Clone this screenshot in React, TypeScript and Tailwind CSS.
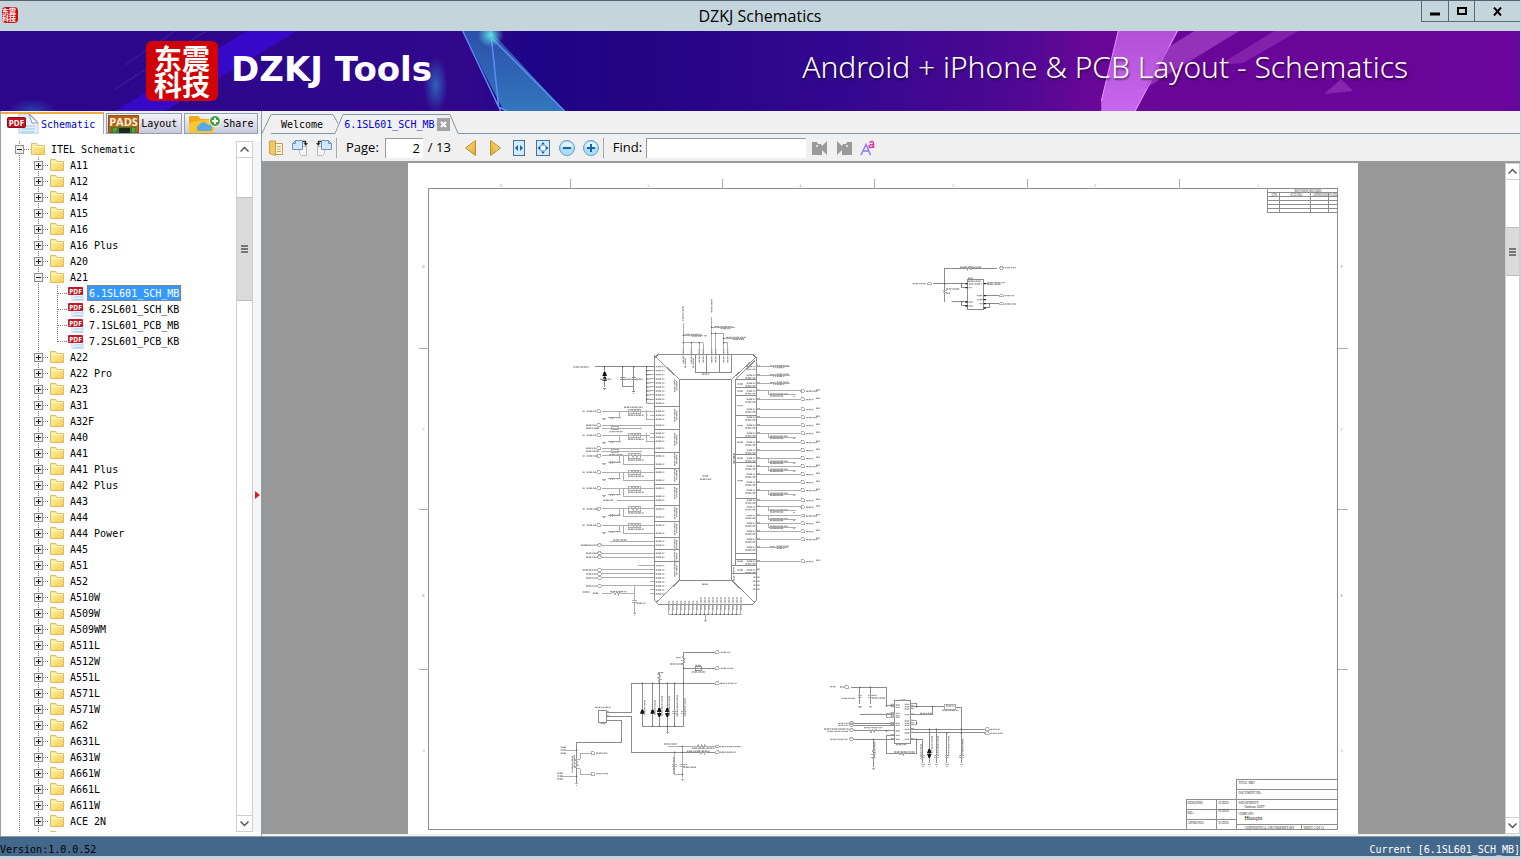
import { useState } from 'react'
import type { ReactNode } from 'react'

type TabId = 'schematic' | 'layout' | 'share'
type DocId = 'welcome' | 'sch'

const FILES = ['6.1SL601_SCH_MB', '6.2SL601_SCH_KB', '7.1SL601_PCB_MB', '7.2SL601_PCB_KB']

const MODELS = [
  'A11', 'A12', 'A14', 'A15', 'A16', 'A16 Plus', 'A20', 'A21', 'A22', 'A22 Pro', 'A23', 'A31', 'A32F',
  'A40', 'A41', 'A41 Plus', 'A42 Plus', 'A43', 'A44', 'A44 Power', 'A45', 'A51', 'A52', 'A510W', 'A509W',
  'A509WM', 'A511L', 'A512W', 'A551L', 'A571L', 'A571W', 'A62', 'A631L', 'A631W', 'A661W', 'A661L',
  'A611W', 'ACE 2N', '',
]

/* ---------- icons ---------- */

function FolderIcon() {
  return (
    <svg width="16" height="16" viewBox="0 0 16 16" className="block">
      <defs>
        <linearGradient id="folder" x1="0" y1="0" x2="1" y2="1">
          <stop offset="0" stopColor="#fff3b0" />
          <stop offset="1" stopColor="#f3cf52" />
        </linearGradient>
      </defs>
      <path d="M1.500 2.500h5l1.500 2h6.500v9h-13z" fill="url(#folder)" stroke="#e0bd5a" />
      <path d="M2 5.500h12" stroke="#fff8d0" />
    </svg>
  )
}

function PdfIcon() {
  return (
    <svg width="16" height="16" viewBox="0 0 16 16" className="block">
      <path d="M4 3h8l3 3v10H4z" fill="#eef6fd" stroke="#b9cfe4" />
      <path d="M6 12h8M6 14.500h8" stroke="#9fd0ee" />
      <rect x="0" y="2" width="15" height="8" rx="1" fill="#c01a28" />
      <text x="7.500" y="8.500" fontSize="6.500" fontWeight="bold" fill="#fff" textAnchor="middle" fontFamily="Open Sans">PDF</text>
    </svg>
  )
}

function PdfTabIcon() {
  return (
    <svg width="32" height="20" viewBox="0 0 32 20" className="block">
      <path d="M12 0h11l8 8v12H12z" fill="#e6f1fb" stroke="#b8cadb" />
      <path d="M22 0l9 9h-6z" fill="#fff" stroke="#8e9cab" />
      <path d="M14 12h14M14 15h14M14 18h14" stroke="#a9d3ef" strokeWidth="1.500" />
      <rect x="0.500" y="3.500" width="18" height="10" rx="1" fill="#c3131f" stroke="#8d0a14" />
      <text x="9.500" y="11.500" fontSize="8" fontWeight="bold" fill="#fff" textAnchor="middle" fontFamily="Open Sans">PDF</text>
    </svg>
  )
}

function PadsIcon() {
  return (
    <svg width="31" height="18" viewBox="0 0 31 18" className="block">
      <rect width="31" height="18" fill="#b5621c" />
      <rect x="0.500" y="0.500" width="30" height="17" fill="none" stroke="#9b4a10" />
      <text x="15.500" y="10.500" fontSize="11" fontWeight="bold" fill="#fff3d8" textAnchor="middle" fontFamily="Open Sans">PADS</text>
      <rect x="3" y="12" width="25" height="6" fill="#3f7d2c" />
      <rect x="11" y="13" width="11" height="5" fill="#1d2a1a" />
      <path d="M5 14h4M5 16h3M24 14h3M24 16h3" stroke="#7fbf4a" />
    </svg>
  )
}

function ShareIcon() {
  return (
    <svg width="32" height="18" viewBox="0 0 32 18" className="block">
      <path d="M0 2q0-1 1-1h8l3 3h13v14H0z" fill="#f3a712" />
      <path d="M0 8l12-3h13v13H0z" fill="#fcc62f" />
      <path d="M9 16a3.500 3.500 0 0 1 1-6 5 5 0 0 1 9 0 3 3 0 0 1 2 6z" fill="#58a8ea" />
      <circle cx="26" cy="6" r="5.500" fill="#43a047" stroke="#fff" />
      <path d="M26 3v6M23 6h6" stroke="#fff" strokeWidth="2" />
    </svg>
  )
}

function ZoomIcon({ plus }: { plus?: boolean }) {
  return (
    <svg width="18" height="18" viewBox="0 0 18 18">
      <circle cx="9" cy="9" r="7.500" fill="#aadcfb" stroke="#6f9cc0" />
      <path d="M3 8a6 5 0 0 1 12 0z" fill="#dcf2ff" />
      <path d="M5 9h8" stroke="#1763a6" strokeWidth="2" />
      {plus && <path d="M9 5v8" stroke="#1763a6" strokeWidth="2" />}
    </svg>
  )
}

function BookIcon() {
  return (
    <svg width="16" height="16" viewBox="0 0 16 16">
      <path d="M5 3.500h9.500v11H5z" fill="#fff6dc" stroke="#c99a4a" />
      <path d="M9 6.500h4M9 9h4M9 11.500h4" stroke="#c0a878" />
      <path d="M1.500 1h6v14.500l-6-2z" fill="#f0c868" stroke="#cf9f48" />
    </svg>
  )
}

function RotateIcon({ left }: { left?: boolean }) {
  return (
    <svg width="18" height="18" viewBox="0 0 18 18" className={left ? '-scale-x-100' : ''}>
      <path d="M8.500 7.500h7v9h-5l-2-2z" fill="#f7f7f7" stroke="#b8b8b8" />
      <path d="M4.500 1.500h7v9h-10v-6z" fill="#cfe6fa" stroke="#6e93ba" />
      <path d="M1.500 4.500h3v-3" fill="none" stroke="#6e93ba" />
      <path d="M12 2.500h2.500v2" fill="none" stroke="#333" strokeWidth="1.500" />
      <path d="M12.500 4h4.500l-2.200 3z" fill="#333" />
    </svg>
  )
}

function TriangleIcon({ right }: { right?: boolean }) {
  return (
    <svg width="16" height="18" viewBox="0 0 16 18" className={right ? '-scale-x-100' : ''}>
      <defs>
        <linearGradient id="tri" x1="0" y1="0" x2="1" y2="1">
          <stop offset="0" stopColor="#ffe48a" />
          <stop offset="1" stopColor="#e0a524" />
        </linearGradient>
      </defs>
      <path d="M12.500 1.500v15L2.500 9z" fill="url(#tri)" stroke="#bd8d33" />
    </svg>
  )
}

function FitIcon({ page }: { page?: boolean }) {
  return (
    <svg width="16" height="16" viewBox="0 0 16 16">
      <rect x={page ? 1.500 : 2.500} y="0.500" width={page ? 13 : 11} height="15" fill="#d4e9fa" stroke="#3f74ac" />
      {page ? (
        <path d="M6 4.500h4L8 2zM6 11.500h4L8 14zM5 6v4L2.500 8zM11 6v4l2.500-2z" fill="#1d5fa6" />
      ) : (
        <path d="M7 5v6L4 8zM9 5v6l3-3z" fill="#1d5fa6" />
      )}
      {page && <rect x="5.500" y="5.500" width="5" height="5" fill="#eef7fe" stroke="#8fb6dc" />}
    </svg>
  )
}

function FindIcon({ next }: { next?: boolean }) {
  return (
    <svg width="16" height="16" viewBox="0 0 16 16" className={next ? '-scale-x-100' : ''}>
      <path d="M0 2h5l1 2h3l1 2 5-5v14l-5-5v5H0z" fill="#9a9a9a" />
      <circle cx="5" cy="6" r="1" fill="#eee" />
    </svg>
  )
}

function Chevron({ down }: { down?: boolean }) {
  return (
    <svg width="9" height="7" viewBox="0 0 9 7" className={down ? 'rotate-180' : ''}>
      <path d="M0.500 5.500l4-4 4 4" fill="none" stroke="#555" strokeWidth="1.500" />
    </svg>
  )
}

function Grip() {
  return (
    <svg width="7" height="8" viewBox="0 0 7 8">
      <path d="M0 1h7M0 4h7M0 7h7" stroke="#555" strokeWidth="1.500" />
    </svg>
  )
}

/* ---------- tree ---------- */

function Guide({ kind = 'line', open }: { kind?: 'line' | 'branch' | 'last' | 'box'; open?: boolean }) {
  return (
    <svg width="19" height="16" viewBox="0 0 19 16" className="block shrink-0">
      <path d={kind === 'last' ? 'M9.500 0v9' : 'M9.500 0v16'} stroke="#808080" strokeDasharray="1 1" />
      {kind !== 'line' && <path d="M10 8.500h11" stroke="#808080" strokeDasharray="1 1" />}
      {kind === 'box' && (
        <>
          <rect x="5.500" y="4.500" width="8" height="8" fill="#eee" stroke="#919191" />
          <path d={open ? 'M7 8.500h5' : 'M7 8.500h5M9.500 6v5'} stroke="#222" />
        </>
      )}
    </svg>
  )
}

function TreeRow({ label, lead, icon, active, onToggle, onPick }: {
  label: string
  lead: ReactNode
  icon: ReactNode
  active?: boolean
  onToggle?: () => void
  onPick?: () => void
}) {
  return (
    <li className="flex h-4 items-center">
      {onToggle ? <button aria-label={`Toggle ${label}`} onClick={onToggle} className="flex">{lead}</button> : lead}
      <span className="ml-px mr-[3px] w-4 shrink-0">{icon}</span>
      {label && (
        <button
          onClick={onPick}
          className={`h-4 whitespace-nowrap border px-px leading-4 ${active ? 'border-dotted border-[#c46a1a] bg-[#3399ff] text-white' : 'border-transparent'}`}
        >
          {label}
        </button>
      )}
    </li>
  )
}

function Tree({ current, onPick }: { current: string; onPick: (f: string) => void }) {
  const [rootOpen, setRootOpen] = useState(true)
  const [open, setOpen] = useState('A21')

  return (
    <ul className="min-w-0 flex-1 overflow-hidden pl-[9px] text-black">
      <TreeRow label="ITEL Schematic" icon={<FolderIcon />} lead={<Guide kind="box" open={rootOpen} />} onToggle={() => setRootOpen(!rootOpen)} />
      {rootOpen && MODELS.map(m => (
        <li key={m}>
          <ul>
            <TreeRow
              label={m}
              icon={<FolderIcon />}
              lead={<><Guide /><Guide kind="box" open={open === m} /></>}
              onToggle={() => setOpen(open === m ? 'none' : m)}
            />
            {open === m && m === 'A21' && FILES.map((f, i) => (
              <TreeRow
                key={f}
                label={f}
                icon={<PdfIcon />}
                active={current === f}
                lead={<><Guide /><Guide /><Guide kind={i === FILES.length - 1 ? 'last' : 'branch'} /></>}
                onPick={() => onPick(f)}
              />
            ))}
          </ul>
        </li>
      ))}
    </ul>
  )
}

/* ---------- schematic sheet ---------- */

type Mark = [number, number, number]

// small unreadable net names, drawn as broken strokes
function Marks({ items, vertical }: { items: Mark[]; vertical?: boolean }) {
  return (
    <path
      d={items.map(([x, y, l]) => `M${x} ${y}${vertical ? 'v' : 'h'}${l}`).join('')}
      stroke="#9c9c9c"
      strokeWidth="1.400"
      strokeDasharray="2 .5 3 .7 1 .5"
      vectorEffect="non-scaling-stroke"
    />
  )
}

function Wires({ d, dark }: { d: string; dark?: boolean }) {
  return <path d={d} fill="none" stroke={dark ? '#8c8c8c' : '#adadad'} vectorEffect="non-scaling-stroke" shapeRendering="crispEdges" />
}

const cap = (x: number, y: number) => `M${x - 7} ${y}h14M${x - 7} ${y + 6}h14`
const gnd = (x: number, y: number) => `M${x - 5} ${y}h10M${x - 2} ${y + 4}h4`
const port = (x: number, y: number) => `M${x} ${y}l3-4h7l3 4-3 4h-7z`
const res = (x: number, y: number) => `M${x} ${y}l3-5 5 10 5-10 5 10 5-10 3 5`
const resV = (x: number, y: number) => `M${x} ${y}l-5 3 10 5-10 5 10 5-10 5 5 3`

function Dots({ at }: { at: [number, number][] }) {
  return <>{at.map(([x, y]) => <circle key={`${x}-${y}`} cx={x} cy={y} r="2.200" fill="#555" />)}</>
}

function Diodes({ at }: { at: [number, number][] }) {
  return <path d={at.map(([x, y]) => `M${x - 7} ${y + 10}h14l-4-12h-6z`).join('')} fill="#111" />
}

const RIGHT_ROWS = [303, 328, 358, 382, 406, 430, 457, 481, 505, 529, 553, 577, 601, 631, 651, 677, 700, 724, 748, 814]
const RIGHT_BRANCH = [303, 430, 505, 529, 601, 651, 677, 700]
const LEFT_SECTIONS = [351, 418, 487, 535, 583, 646, 694, 742, 778, 814]
const RIGHT_SECTIONS = [268, 292, 317, 377, 443, 493, 517, 626, 790, 808, 827]
const LEFT_RAILS = [364, 436, 498, 547, 595, 657, 706]
const LEFT_ROWS = [766, 790, 802, 840, 852, 864, 888]
const LEFT_PINS = [
  230, 242, 254, 267, 279, 291, 303, 315, 328, 340, 364, 376, 388, 406, 430, 442, 454, 475, 498, 523, 547,
  571, 595, 619, 631, 657, 681, 706, 730, 754, 766, 790, 802, 827, 840, 852, 864, 876, 888, 900, 912,
]
const BOTTOM_PINS = Array.from({ length: 19 }, (_, i) => 325 + i * 12)

function MainChip() {
  return (
    <g transform="translate(560 290) scale(.3333)">
      <Wires dark d="M295 193H578L590 205V931L578 943H295L283 931V205zM358 268H515V871H358zM283 197L358 268M590 200L515 268M585 212L527 268V827M358 871L288 938M515 871L585 938" />
      <Wires dark d={LEFT_SECTIONS.map(y => `M283 ${y}h75`).join('') + RIGHT_SECTIONS.map(y => `M527 ${y}h63`).join('') + 'M515 851h75M515 827h75'} />
      <Wires dark d="M406 193v56h109v-56M440 193v56M478 193v56" />

      {/* pins on the left edge */}
      <Wires d={LEFT_PINS.map(y => `M270 ${y}h13`).join('')} />
      <Marks items={LEFT_PINS.map(y => [287, y, 26] as Mark)} />
      <Wires dark d={`M105 230H283M260 230V340M188 230v60h32v15M222 230v60M133 230v62${cap(188, 262)}${cap(222, 262)}${gnd(133, 296)}${gnd(220, 306)}`} />
      <path d={[242, 254, 267, 279, 291, 303, 315, 328, 340].map(y => `M260 ${y}h12`).join('')} stroke="#888" vectorEffect="non-scaling-stroke" />
      <Diodes at={[[134, 248], [134, 262]]} />
      <Dots at={[[260, 230], [133, 230], [188, 230], [222, 230], [260, 242], [260, 254], [260, 267], [260, 279], [260, 291], [260, 303], [260, 315], [260, 328], [260, 376], [260, 364]]} />
      <Wires d={LEFT_RAILS.map(y => `M125 ${y}H270${port(110, y)}M178 ${y}v20h-35${gnd(132, y + 22)}M152 ${y + 16}v8M158 ${y + 16}v8M206 ${y - 6}h36v13h-36z${res(212, y)}`).join('')} />
      <Marks items={LEFT_RAILS.flatMap(y => [[80, y, 28], [68, y, 6], [148, y + 19, 34], [204, y + 12, 48]] as Mark[])} />
      <Wires d="M260 364v24h12M260 430v24h12M190 498v25h80M190 547v24h80M190 595v24h80M190 657v24h80M190 706v24h80" />
      <Wires d={`${port(110, 406)}M125 406H270M125 415H245${port(110, 475)}M125 475H270M125 484H245M155 409h20v11h-20zM155 478h20v11h-20zM172 631H270M150 754H270M235 827H270`} />
      <Marks items={[[78, 406, 30], [78, 415, 40], [78, 475, 30], [78, 484, 40], [148, 425, 40], [148, 494, 40], [130, 631, 30], [160, 750, 40], [192, 352, 56], [40, 231, 48], [195, 268, 24], [228, 268, 22], [120, 268, 34]]} />
      <Wires d={LEFT_ROWS.map(y => `M125 ${y}H270${port(112, y)}`).join('') + `M125 910h32${res(157, 910)}M183 910h40v60M223 888v30M223 888h47${cap(223, 932)}${gnd(223, 972)}`} />
      <Marks items={LEFT_ROWS.map(y => [78, y, 34] as Mark)} />
      <Marks items={[[62, 766, 20], [68, 840, 12], [68, 906, 22], [98, 910, 16], [150, 905, 50], [230, 940, 26]]} />
      <Marks vertical items={[268, 358, 430, 490, 537, 590, 650, 698, 746, 786, 822].flatMap(y => [[344, y, 38], [350, y + 4, 28]] as Mark[])} />

      {/* pins on the right edge */}
      <Wires d={RIGHT_ROWS.map(y => `M590 ${y}H722${port(722, y)}`).join('') + [230, 256, 280].map(y => `M590 ${y}h100M642 ${y - 4}v8M648 ${y - 4}v8`).join('') + 'M590 772h95'} />
      <Wires d={RIGHT_BRANCH.map(y => `M625 ${y}v12h72M646 ${y + 8}v8M652 ${y + 8}v8${gnd(702, y + 12)}`).join('')} />
      <Marks items={[230, 256, 280, 772].flatMap(y => [[630, y - 2, 14], [650, y - 3, 36], [650, y + 3, 24]] as Mark[])} />
      <Marks items={RIGHT_BRANCH.flatMap(y => [[630, y + 9, 54], [630, y + 15, 40]] as Mark[])} />
      <Marks items={RIGHT_ROWS.flatMap((y, i) => [[738, y + 1, i % 3 ? 24 : 34], [768, y - 3, 12]] as Mark[])} />
      <Marks items={[230, 256, 280, ...RIGHT_ROWS, 772, 840].flatMap(y => [[560, y, 26], [556, y + 8, 32], [590, y - 2, 10]] as Mark[])} />
      <Marks items={[282, 303, 347, 407, 457, 505, 572, 814, 840].map(y => [532, y, 18] as Mark)} />
      <Marks items={[862, 874, 886, 898].flatMap(y => [[580, y, 8], [592, y, 8]] as Mark[])} />
      <Marks vertical items={[[521, 490, 32], [524, 490, 32], [521, 832, 24], [522, 858, 16]]} />

      {/* top and bottom */}
      <Wires d={`M370 100V193M394 158V193M418 158V193M430 158V193M370 158h60M455 80V193M467 130V193M455 130h36V193M503 158V193M491 158h12M370 136h60M455 112h70M491 145h60${gnd(436, 136)}`} />
      <Marks vertical items={[[369, 48, 46], [455, 28, 40], [370, 178, 44], [376, 205, 30], [394, 178, 44], [400, 205, 30], [418, 178, 40], [430, 178, 40], [455, 178, 40], [467, 178, 40], [491, 178, 40], [503, 178, 40]]} />
      <Marks items={[[374, 133, 50], [395, 138, 30], [462, 110, 56], [482, 116, 30], [498, 142, 60], [518, 148, 34], [426, 252, 22], [426, 883, 20], [428, 558, 18], [420, 568, 34]]} />
      <Dots at={[[370, 136], [370, 158], [394, 158], [418, 158], [455, 112], [455, 130], [467, 130], [491, 145], [491, 158]]} />
      <Wires d={BOTTOM_PINS.map(x => `M${x} 943v30`).join('') + 'M325 973H545M436 973v18' + gnd(436, 992)} />
      <Marks vertical items={BOTTOM_PINS.map((x, i) => [x + 2, i > 7 ? 922 : 932, i > 7 ? 38 : 28] as Mark)} />
      <Dots at={BOTTOM_PINS.slice(1, -1).map(x => [x, 973] as [number, number])} />
    </g>
  )
}

function MicCircuit() {
  return (
    <g transform="translate(540 630) scale(.3333)">
      <Wires dark d="M175 241h24v36h-24zM199 248H275V160H525M199 259H275V367H525M199 271H244V337H110V460M307 160V289H431M338 160V289M358 130V289M382 160V305M404 160V289M431 67V289M431 67H525M431 115H525M466 110h18v11h-18z" />
      <Wires d={`${port(525, 67)}${port(525, 115)}${port(525, 160)}${port(525, 350)}${port(525, 367)}${resV(431, 78)}${cap(404, 245)}${cap(431, 245)}${gnd(382, 308)}M385 349H525${res(472, 349)}${res(475, 367)}M404 367V433H427M427 349V445${cap(427, 404)}${gnd(427, 449)}${cap(404, 404)}${gnd(110, 462)}M78 361H110M60 439H110M121 370h34M121 370v18M110 388h11M121 416v17h34M110 416h11${port(152, 370)}${port(152, 433)}${resV(110, 388)}${resV(358, 130)}`} />
      <Diodes at={[[307, 241], [338, 241], [358, 236], [382, 236]]} />
      <path d="M351 249h14l-5 12h-4zM375 249h14l-5 12h-4z" fill="#111" />
      <Dots at={[[307, 160], [338, 160], [358, 160], [382, 160], [404, 160], [431, 160], [431, 115], [338, 289], [358, 289], [382, 289], [404, 289], [427, 349], [427, 367], [404, 367], [110, 361], [110, 439], [427, 433]]} />
      <Marks items={[[165, 232, 48], [182, 281, 14], [200, 245, 8], [200, 257, 8], [542, 67, 30], [542, 115, 38], [540, 160, 50], [408, 83, 14], [390, 102, 38], [466, 106, 16], [455, 126, 42], [354, 128, 16], [372, 342, 38], [537, 350, 68], [537, 367, 50], [455, 355, 70], [440, 364, 70], [430, 404, 12], [430, 412, 38], [62, 352, 18], [62, 360, 16], [62, 370, 18], [52, 430, 18], [52, 438, 16], [52, 447, 18], [168, 370, 34], [168, 431, 36]]} />
      <Marks vertical items={[[314, 210, 46], [345, 210, 46], [366, 198, 60], [388, 198, 60], [412, 195, 66], [435, 205, 55], [97, 378, 50], [103, 374, 40], [401, 382, 50]]} />
    </g>
  )
}

function ChargerCircuit() {
  return (
    <g transform="translate(810 670) scale(.3333)">
      <Wires dark d="M254 91h47v129h-47zM122 52H229V108H254M150 52v50M181 52v50M301 110H404M320 110v-8h-19M368 110v24h-67M437 112h17v77M301 178H525M301 189H525M132 160H254M132 166H254M132 183H254M132 208H254M229 196h25M229 196v54H320V208H301M320 208H339V280M191 208V290M358 178V280M379 178V280M411 189V280M454 189V280M150 135H254" />
      <Wires d={`${port(104, 52)}${port(118, 160)}${port(118, 166)}${port(118, 181)}${port(118, 208)}${port(525, 178)}${port(525, 190)}${cap(150, 76)}${cap(181, 76)}${gnd(150, 110)}${gnd(181, 110)}${cap(339, 256)}${cap(379, 256)}${cap(411, 256)}${cap(454, 256)}${gnd(339, 285)}${gnd(358, 285)}${gnd(379, 285)}${gnd(411, 285)}${gnd(454, 285)}${gnd(191, 295)}${resV(191, 240)}${res(262, 250)}${res(175, 183)}M404 105h33v13h-33zM301 153h18v12h-18M229 130h25v13h-25z`} />
      <path d="M351 249h14l-5-13h-4zM351 251h14l-5 13h-4z" fill="#111" />
      <Dots at={[[150, 52], [181, 52], [229, 108], [320, 110], [368, 110], [454, 178], [358, 178], [379, 178], [411, 189], [454, 189], [320, 160], [229, 183], [191, 208], [320, 208]]} />
      <Marks items={[[60, 50, 18], [90, 51, 14], [95, 85, 42], [188, 76, 12], [186, 84, 40], [272, 90, 14], [165, 133, 54], [84, 160, 32], [84, 166, 32], [42, 177, 74], [52, 184, 64], [60, 208, 54], [162, 173, 56], [252, 246, 62], [258, 224, 32], [330, 130, 36], [408, 108, 26], [396, 121, 50], [540, 178, 30], [540, 190, 38]]} />
      <Marks items={[105, 112, 130, 137, 142, 160, 166, 183, 196, 208].flatMap(y => [[242, y - 2, 10], [257, y, 12]] as Mark[])} />
      <Marks items={[103, 110, 117, 134, 153, 160, 166, 178, 189, 208].flatMap(y => [[284, y, 14], [303, y - 2, 10]] as Mark[])} />
      <Marks vertical items={[[194, 215, 50], [333, 222, 44], [366, 198, 50], [384, 198, 56], [416, 198, 60], [458, 206, 50]]} />
    </g>
  )
}

function SensorCircuit() {
  return (
    <g transform="translate(900 170) scale(.3333)">
      <Wires dark d="M203 328h48v92h-48zM135 295H290M135 295V395M100 341H203M185 341v12h18M160 396H203M185 396v12h18M251 341h15M251 377h45M251 401h45M269 401v13h-18" />
      <Wires d={`${port(82, 341)}${port(298, 295)}${port(298, 377)}${port(298, 401)}${cap(135, 362)}${res(195, 295)}`} />
      <path d="M196 339h7v4h-7zM196 351h7v4h-7zM196 394h7v4h-7zM196 406h7v4h-7zM251 339h7v4h-7zM251 375h7v4h-7zM251 387h7v4h-7zM251 399h7v4h-7zM251 412h7v4h-7z" fill="#222" />
      <Dots at={[[135, 341], [185, 341], [185, 396], [269, 401]]} />
      <Marks items={[[180, 292, 66], [38, 341, 42], [204, 325, 14], [204, 334, 38], [206, 342, 14], [224, 342, 22], [206, 353, 10], [262, 338, 54], [262, 343, 40], [138, 357, 40], [138, 370, 12], [155, 395, 22], [206, 396, 12], [206, 408, 12], [230, 377, 20], [232, 389, 18], [238, 401, 12], [314, 293, 34], [314, 377, 30], [314, 402, 34]]} />
    </g>
  )
}

function Sheet() {
  return (
    <svg width="950" height="671" viewBox="408 163 950 671" className="block shrink-0 bg-white" role="img" aria-label="Schematic sheet">
      <g transform="translate(.5 .5)">
        <Wires dark d="M428 188H1337V829H428z" />
        <Wires d="M570 178v10M722 178v10M874 178v10M1027 178v10M1179 178v10M418 348h10M418 509h10M418 669h10M1337 348h10M1337 509h10M1337 669h10" />
        <g fontSize="3" fill="#777" fontFamily="Liberation Serif">
          {[500, 647, 799, 952, 1094, 1257].map((x, i) => <text key={x} x={x} y="186">{6 - i}</text>)}
          {[267, 430, 596, 751].map((y, i) => <text key={y} x="422" y={y}>{'DCBA'[i]}</text>)}
          {[267, 430, 596, 751].map((y, i) => <text key={y} x="1340" y={y}>{'DCBA'[i]}</text>)}
        </g>

        {/* revision record */}
        <Wires dark d="M1267 188h70v24h-70zM1267 192h70M1267 196h70M1267 200h70M1267 204h70M1267 208h70M1279 192v20M1310 192v20M1328 192v20" />
        <g fontSize="3" fill="#333" fontFamily="Liberation Serif">
          <text x="1294" y="191">REVISION RECORD</text>
          <text x="1271" y="195">LTR</text>
          <text x="1290" y="195">ECO NO:</text>
          <text x="1312" y="195">APPROVED:</text>
          <text x="1329" y="195">DATE:</text>
        </g>

        {/* title block */}
        <Wires dark d="M1236 779h101v50h-101zM1236 789h101M1236 799h101M1236 809h101M1236 824h101M1301 824v5M1186 799h50v30h-50zM1186 809h50M1186 819h50M1216 799v30" />
        <g fontSize="3" fill="#222" fontFamily="Liberation Serif">
          <text x="1238" y="783">TITLE: MBT</text>
          <text x="1238" y="793">DOCUMENT NO:</text>
          <text x="1238" y="803">DEPARTMENT:</text>
          <text x="1244" y="807">Hardware DEPT</text>
          <text x="1238" y="814">COMPANY:</text>
          <text x="1244" y="819" fontSize="6">Huaqin</text>
          <text x="1244" y="828">CONFIDENTIAL AND PROPRIETARY</text>
          <text x="1303" y="828">SHEET: 2 OF 13</text>
          <text x="1187" y="803">DESIGNER:</text>
          <text x="1187" y="813">REL:</text>
          <text x="1187" y="823">APPROVED:</text>
          <text x="1218" y="803">DATED:</text>
          <text x="1218" y="811">DATED:</text>
          <text x="1218" y="823">DATED:</text>
        </g>
      </g>

      <MainChip />
      <MicCircuit />
      <ChargerCircuit />
      <SensorCircuit />
    </svg>
  )
}

/* ---------- chrome ---------- */

function BannerArt() {
  return (
    <svg viewBox="0 0 1521 80" preserveAspectRatio="none" className="absolute inset-0 h-full w-full">
      <defs>
        <linearGradient id="base" x1="0" x2="1">
          <stop offset="0" stopColor="#2b078c" />
          <stop offset=".31" stopColor="#31078c" />
          <stop offset=".35" stopColor="#1c0586" />
          <stop offset=".42" stopColor="#240485" />
          <stop offset=".55" stopColor="#33078f" />
          <stop offset=".66" stopColor="#4c0894" />
          <stop offset=".72" stopColor="#690798" />
          <stop offset="1" stopColor="#69059a" />
        </linearGradient>
        <linearGradient id="teal" x1="0" y1="0" x2="0" y2="1">
          <stop offset="0" stopColor="#2c4fac" />
          <stop offset="1" stopColor="#3277bd" />
        </linearGradient>
        <linearGradient id="pink" x1="0" y1="0" x2="0" y2="1">
          <stop offset="0" stopColor="#b24fd6" />
          <stop offset="1" stopColor="#c868ee" />
        </linearGradient>
        <radialGradient id="glow">
          <stop offset="0" stopColor="#2d78c8" />
          <stop offset="1" stopColor="#2d78c8" stopOpacity="0" />
        </radialGradient>
        <radialGradient id="spark">
          <stop offset="0" stopColor="#5fe0e0" />
          <stop offset="1" stopColor="#5fe0e0" stopOpacity="0" />
        </radialGradient>
      </defs>
      <rect width="1521" height="80" fill="url(#base)" />
      <path d="M247 0h50L165 80h-50z" fill="#3a08e0" opacity=".7" />
      <path d="M206 0L115 58M175 0l-50 34" stroke="#5a3fb5" opacity=".5" />
      <ellipse cx="436" cy="54" rx="12" ry="28" fill="url(#glow)" opacity=".8" />
      <ellipse cx="32" cy="80" rx="24" ry="12" fill="url(#glow)" opacity=".5" />
      <path d="M463 0h28l74 80h-61z" fill="url(#teal)" />
      <path d="M463 0l38 80M491 0l8 76M491 6l74 74M499 76l8 4" fill="none" stroke="#5f8cf0" strokeWidth="1.500" />
      <ellipse cx="491" cy="4" rx="13" ry="12" fill="url(#spark)" />
      <path d="M1119 0h60l-43 80h-34v-10z" fill="url(#pink)" />
      <path d="M1119 0l-17 70M1178 0l-42 80" stroke="#e09bff" />
      <path d="M1195 0h45l-95 58 18-38z" fill="#b050d0" opacity=".6" />
      <path d="M1275 0h24l-55 32-24 2z" fill="#9a3bc0" opacity=".5" />
      <path d="M1342 48l12 12-29 3z" fill="#9a3bc0" opacity=".6" />
    </svg>
  )
}

function ToolButton({ label, children }: { label: string; children: ReactNode }) {
  return <button aria-label={label} className="flex h-6 w-6 items-center justify-center">{children}</button>
}

function VScroll({ thumb, width }: { thumb: ReactNode; width: string }) {
  return (
    <div className={`flex shrink-0 flex-col border border-[#cfcfcf] bg-white ${width}`}>
      <button aria-label="Scroll up" className="flex h-4 items-center justify-center border-b border-[#cfcfcf]"><Chevron /></button>
      {thumb}
      <button aria-label="Scroll down" className="mt-auto flex h-4 items-center justify-center border-t border-[#cfcfcf]"><Chevron down /></button>
    </div>
  )
}

const SIDE_TABS: { id: TabId; label: string; icon: ReactNode; pad: string }[] = [
  { id: 'schematic', label: 'Schematic', icon: <PdfTabIcon />, pad: 'pl-[6px] pr-2' },
  { id: 'layout',    label: 'Layout',    icon: <PadsIcon />,   pad: 'pl-px pr-1' },
  { id: 'share',     label: 'Share',     icon: <ShareIcon />,  pad: 'pl-1 pr-1' },
]

export default function App() {
  const [tab, setTab] = useState<TabId>('schematic')
  const [doc, setDoc] = useState<DocId>('sch')
  const [file, setFile] = useState(FILES[0])
  const [page, setPage] = useState('2')

  return (
    <div className="flex h-screen flex-col overflow-hidden bg-[#c4d6dc] pr-px font-['DejaVu_Sans_Mono','Liberation_Mono',monospace] text-[10px] text-black">

      {/* TITLE BAR */}
      <header className="relative flex h-[31px] shrink-0 items-center justify-center border-t border-[#56646f]">
        <span className="absolute left-[2px] top-[6px] flex h-4 w-4 flex-wrap items-center justify-center rounded-sm bg-[#cc0a12] font-['Noto_Sans_CJK_SC',sans-serif] text-[7px] font-bold leading-[7px] text-white">东震科技</span>
        <h1 className="font-['Open_Sans','Noto_Sans',sans-serif] text-[16px]">DZKJ Schematics</h1>
        <div className="absolute right-0 top-0 flex h-[21px] border-b border-l border-[#5b6a72]">
          <button aria-label="Minimize" className="flex w-[27px] items-center justify-center border-r border-[#5b6a72]">
            <svg width="10" height="10" viewBox="0 0 10 10"><path d="M0 8h10" stroke="#000" strokeWidth="3" /></svg>
          </button>
          <button aria-label="Maximize" className="flex w-[26px] items-center justify-center border-r border-[#5b6a72]">
            <svg width="10" height="8" viewBox="0 0 10 8"><path d="M1 1h8v6H1z" fill="none" stroke="#000" strokeWidth="2" /></svg>
          </button>
          <button aria-label="Close" className="flex w-[45px] items-center justify-center">
            <svg width="9" height="9" viewBox="0 0 9 9"><path d="M1 0.500l7 8M8 0.500l-7 8" stroke="#000" strokeWidth="2" /></svg>
          </button>
        </div>
      </header>

      {/* BANNER */}
      <div className="relative h-20 shrink-0 overflow-hidden">
        <BannerArt />
        <div className="relative flex h-full items-center pl-[146px] pr-[112px] text-white">
          <div className="flex h-[60px] w-[72px] shrink-0 items-center justify-center rounded-md bg-[#d00404] font-['Noto_Sans_CJK_SC',sans-serif] text-[28px] font-bold leading-[26px]">
            <span className="w-[58px] break-all text-center">东震科技</span>
          </div>
          <div className="ml-[13px] whitespace-nowrap pb-1 font-['DejaVu_Sans','Open_Sans',sans-serif] text-[34px] font-bold leading-10">DZKJ Tools</div>
          <div className="ml-auto whitespace-nowrap pb-2 font-['Noto_Sans','Open_Sans',sans-serif] text-[30px] font-light leading-10 [text-shadow:1px_2px_2px_rgba(0,0,0,0.5)]">
            Android + iPhone &amp; PCB Layout - Schematics
          </div>
        </div>
      </div>

      <div className="flex min-h-0 flex-1">
        {/* SIDE PANEL */}
        <aside className="flex w-[261px] shrink-0 flex-col border-l border-[#8fa5b0] bg-white">
          <div className="flex h-[23px] shrink-0 items-end gap-[2px] bg-[#f0f0f0] pt-px">
            {SIDE_TABS.map(t => (
              <button
                key={t.id}
                onClick={() => setTab(t.id)}
                className={`flex items-center gap-[2px] overflow-hidden ${t.pad} ${
                  tab === t.id
                    ? 'h-[22px] border-r border-t-2 border-[#a0a8b4] border-t-[#f5a83c] bg-white text-[#0000c8]'
                    : 'h-[21px] border border-[#8fa0b4] bg-linear-to-b from-[#f4f4f8] to-[#c8cadc]'
                }`}
              >
                {t.icon}
                {t.label}
              </button>
            ))}
          </div>
          <div className="flex min-h-0 flex-1 pb-1 pt-[7px]">
            <Tree current={file} onPick={setFile} />
            <VScroll width="w-[17px]" thumb={
              <div className="mt-[39px] flex h-[104px] items-center justify-center border-y border-[#bdbdbd] bg-[#dadada]"><Grip /></div>
            } />
            <div className="flex w-2 items-center justify-center bg-[#f4f5f9] pt-4">
              <svg width="5" height="8" viewBox="0 0 5 8"><path d="M0 0v8l5-4z" fill="#e02020" /></svg>
            </div>
          </div>
        </aside>

        {/* DOCUMENT AREA */}
        <main className="flex min-w-0 flex-1 flex-col border-l border-[#8f9aa3] bg-[#f0f0f0]">
          <div className="flex h-[23px] shrink-0 items-end">
            <svg width="9" height="20" viewBox="0 0 9 20"><path d="M0 19.500L9 .5" fill="none" stroke="#8496a4" /></svg>
            <button onClick={() => setDoc('welcome')} className="h-5 border-b border-t border-[#8496a4] px-[10px] leading-[20px]">Welcome</button>
            <svg width="10" height="20" viewBox="0 0 10 20"><path d="M0 .5l5 9M0 19.500h2L10 .5" fill="none" stroke="#8496a4" /></svg>
            <div className="flex h-5 items-center gap-[3px] border-t border-[#8496a4] pl-px">
              <button onClick={() => setDoc('sch')} aria-pressed={doc === 'sch'} className="text-[#0000d8]">{file}</button>
              <button aria-label="Close tab" className="flex h-[13px] w-[13px] items-center justify-center bg-[#a3a3a3]">
                <svg width="7" height="7" viewBox="0 0 7 7"><path d="M1 1l5 5M6 1L1 6" stroke="#fff" strokeWidth="2" /></svg>
              </button>
            </div>
            <svg width="9" height="20" viewBox="0 0 9 20"><path d="M0 .5l8 19h1" fill="none" stroke="#8496a4" /></svg>
            <div className="h-5 flex-1 border-b border-[#8496a4]" />
          </div>

          <div className="flex h-[29px] shrink-0 items-center border-b-2 border-[#9a9a9a] pl-[2px] font-['Open_Sans','Noto_Sans',sans-serif] text-[13px]">
            <ToolButton label="Open"><BookIcon /></ToolButton>
            <ToolButton label="Rotate right"><RotateIcon /></ToolButton>
            <ToolButton label="Rotate left"><RotateIcon left /></ToolButton>
            <span className="h-5 w-px bg-[#a8a8a8]" />
            <label htmlFor="page" className="pl-[9px]">Page:</label>
            <input
              id="page"
              value={page}
              onChange={e => setPage(e.target.value)}
              className="ml-[6px] h-5 w-[38px] border-l border-t border-[#9a9a9a] bg-white pr-[3px] text-right"
            />
            <span className="ml-[5px] mr-2">/ 13</span>
            <ToolButton label="Previous page"><TriangleIcon /></ToolButton>
            <ToolButton label="Next page"><TriangleIcon right /></ToolButton>
            <ToolButton label="Fit width"><FitIcon /></ToolButton>
            <ToolButton label="Fit page"><FitIcon page /></ToolButton>
            <ToolButton label="Zoom out"><ZoomIcon /></ToolButton>
            <ToolButton label="Zoom in"><ZoomIcon plus /></ToolButton>
            <span className="h-5 w-px bg-[#a8a8a8]" />
            <label htmlFor="find" className="pl-[9px]">Find:</label>
            <input id="find" className="ml-1 mr-[2px] h-5 w-[160px] border-l border-t border-[#9a9a9a] bg-white px-1" />
            <ToolButton label="Find previous"><FindIcon /></ToolButton>
            <ToolButton label="Find next"><FindIcon next /></ToolButton>
            <ToolButton label="Match case">
              <svg width="16" height="16" viewBox="0 0 16 16" fill="none">
                <path d="M1 15L6 4.500 10.500 15M3 11h6" stroke="#8a7be8" strokeWidth="1.500" />
                <path d="M9.500 2.500Q13.500 0 13.500 3.500V8M13.500 4.500C8 4 8 8 11 7.500Q13 7.500 13.500 5.500" stroke="#d83ab0" strokeWidth="1.500" />
              </svg>
            </ToolButton>
          </div>

          <div className="flex min-h-0 flex-1 border-b-2 border-[#f0f0f0]">
            <div className="flex min-w-0 flex-1 justify-center overflow-hidden bg-[#989898] pr-px">
              <Sheet />
            </div>
            <VScroll width="w-[15px]" thumb={
              <div className="mt-[47px] flex h-[49px] items-center justify-center border-y border-[#bdbdbd] bg-[#dadada]"><Grip /></div>
            } />
          </div>
        </main>
      </div>

      {/* STATUS BAR */}
      <footer className="mb-[3px] flex h-5 shrink-0 items-end justify-between border-t border-[#8f9aa3] bg-[#44688b] leading-3">
        <span>Version:1.0.0.52</span>
        <span className="text-white">Current [{file}]</span>
      </footer>
    </div>
  )
}
